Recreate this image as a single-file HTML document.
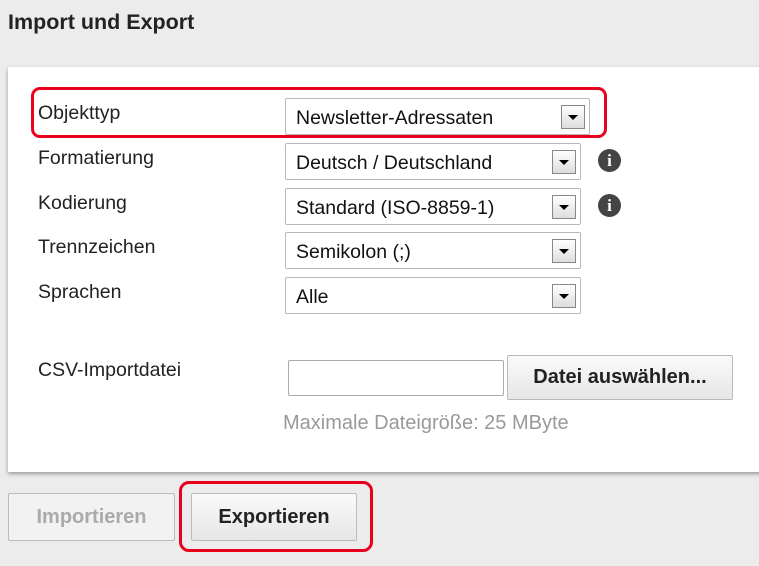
<!DOCTYPE html>
<html><head><meta charset="utf-8"><style>
body{margin:0;width:759px;height:566px;background:#ececec;font-family:"Liberation Sans",Arial,sans-serif;position:relative;overflow:hidden}
.a{position:absolute}
h1{position:absolute;left:8px;top:10px;margin:0;font-size:21.5px;font-weight:bold;color:#222}
.panel{left:8px;top:67px;width:760px;height:405px;background:#fff;box-shadow:0 2px 4px rgba(0,0,0,.35)}
.lbl{font-size:19.5px;color:#222;left:38px}
.sel{border:1px solid #b8b8b8;border-radius:2px;background:#fff;font-size:19.5px;color:#111;box-sizing:border-box;padding-left:10px;line-height:38px}
.arr{position:absolute;right:4px;top:6px;width:24px;height:24px;border:1px solid #888;box-sizing:border-box;background:linear-gradient(#fff,#ddd)}
.arr:after{content:"";position:absolute;left:6px;top:9px;border-left:5px solid transparent;border-right:5px solid transparent;border-top:5px solid #000}
.info{width:23px;height:23px;border-radius:50%;background:#444;color:#fff;font-weight:bold;font-size:17px;text-align:center;line-height:23px;font-family:"Liberation Serif",serif}
.red{border:3px solid #e8001c;border-radius:9px;box-sizing:border-box}
.btn{border:1px solid #bbb;border-radius:2px;background:linear-gradient(#fafafa,#e6e6e6);font-size:20px;font-weight:bold;text-align:center;box-sizing:border-box}
</style></head><body>
<h1>Import und Export</h1>
<div class="a panel"></div>
<div class="a lbl" style="top:102px">Objekttyp</div>
<div class="a lbl" style="top:147px">Formatierung</div>
<div class="a lbl" style="top:192px">Kodierung</div>
<div class="a lbl" style="top:236px">Trennzeichen</div>
<div class="a lbl" style="top:281px">Sprachen</div>
<div class="a lbl" style="top:359px">CSV-Importdatei</div>
<div class="a sel" style="left:285px;top:98px;width:305px;height:37px">Newsletter-Adressaten<div class="arr"></div></div>
<div class="a sel" style="left:285px;top:143px;width:296px;height:37px">Deutsch / Deutschland<div class="arr"></div></div>
<div class="a sel" style="left:285px;top:188px;width:296px;height:37px">Standard (ISO-8859-1)<div class="arr"></div></div>
<div class="a sel" style="left:285px;top:232px;width:296px;height:37px">Semikolon (;)<div class="arr"></div></div>
<div class="a sel" style="left:285px;top:277px;width:296px;height:37px">Alle<div class="arr"></div></div>
<div class="a info" style="left:598px;top:149px">i</div>
<div class="a info" style="left:598px;top:194px">i</div>
<div class="a red" style="left:31px;top:87px;width:576px;height:51px"></div>
<div class="a" style="left:288px;top:360px;width:216px;height:36px;border:1px solid #aaa;border-radius:2px;box-sizing:border-box;background:#fff"></div>
<div class="a btn" style="left:507px;top:355px;width:226px;height:45px;line-height:43px;color:#222">Datei auswählen...</div>
<div class="a" style="left:283px;top:412px;font-size:20px;color:#999">Maximale Dateigröße: 25 MByte</div>
<div class="a btn" style="left:8px;top:493px;width:167px;height:48px;line-height:46px;color:#aaa;background:#f2f2f2">Importieren</div>
<div class="a btn" style="left:191px;top:493px;width:166px;height:48px;line-height:46px;color:#222">Exportieren</div>
<div class="a red" style="left:179px;top:481px;width:194px;height:71px;border-radius:10px"></div>
</body></html>
